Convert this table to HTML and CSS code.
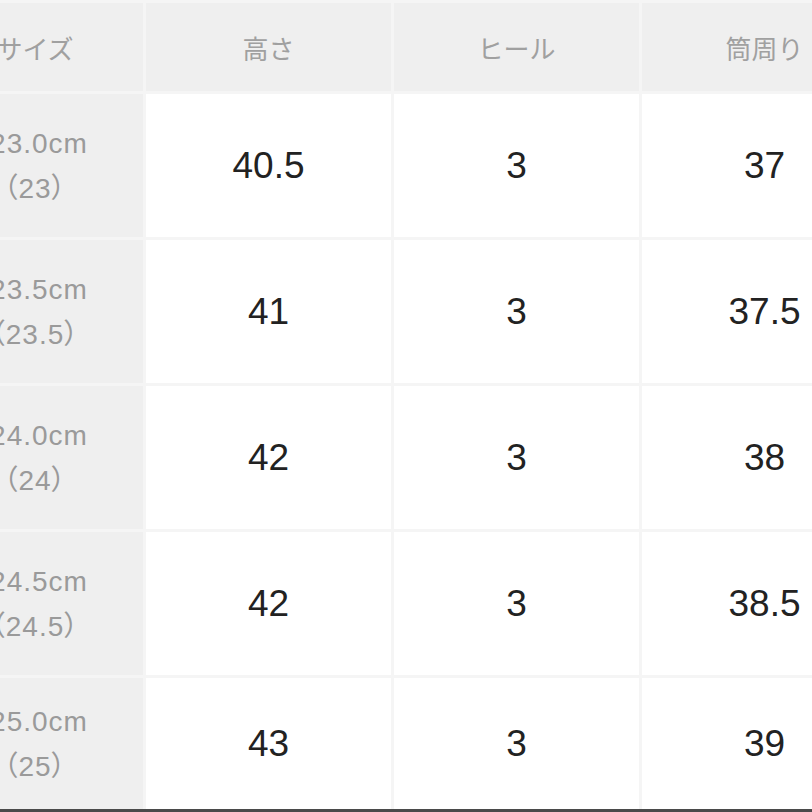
FILE: index.html
```html
<!DOCTYPE html>
<html lang="ja">
<head>
<meta charset="utf-8">
<title>サイズ表</title>
<link rel="stylesheet" href="styles.css">
</head>
<body>
<div class="frame">
  <table class="size-table">
    <colgroup>
      <col class="c-label">
      <col class="c-data">
      <col class="c-data">
      <col class="c-data">
    </colgroup>
    <thead>
      <tr>
        <th class="label">サイズ</th>
        <th>高さ</th>
        <th>ヒール</th>
        <th>筒周り</th>
      </tr>
    </thead>
    <tbody>
      <tr>
        <th class="label"><span class="cm">23.0cm</span><span class="jp">（23）</span></th>
        <td>40.5</td><td>3</td><td>37</td>
      </tr>
      <tr>
        <th class="label"><span class="cm">23.5cm</span><span class="jp">（23.5）</span></th>
        <td>41</td><td>3</td><td>37.5</td>
      </tr>
      <tr>
        <th class="label"><span class="cm">24.0cm</span><span class="jp">（24）</span></th>
        <td>42</td><td>3</td><td>38</td>
      </tr>
      <tr>
        <th class="label"><span class="cm">24.5cm</span><span class="jp">（24.5）</span></th>
        <td>42</td><td>3</td><td>38.5</td>
      </tr>
      <tr class="last">
        <th class="label"><span class="cm">25.0cm</span><span class="jp">（25）</span></th>
        <td>43</td><td>3</td><td>39</td>
      </tr>
    </tbody>
  </table>
</div>
</body>
</html>
```
FILE: styles.css
```css
html, body {
  margin: 0;
  padding: 0;
  background: #f5f5f5;
  overflow: hidden;
}

.frame {
  height: 809px;
  overflow: hidden;
  border-bottom: 3px solid #4a4a4a;
}

.size-table {
  margin-left: -60px;
  width: 950px;
  min-width: 950px;
  border-collapse: separate;
  border-spacing: 3px;
  background: #f5f5f5;
  table-layout: fixed;
  font-family: "Liberation Sans", "Noto Sans CJK JP", sans-serif;
}

.c-label { width: 200px; }
.c-data { width: 245px; }

.size-table th,
.size-table td {
  padding: 0;
  text-align: center;
  vertical-align: middle;
}

.size-table thead th {
  height: 88px;
  background: #efefef;
  color: #a0a0a0;
  font-family: "Noto Sans CJK JP", sans-serif;
  font-weight: 400;
  font-size: 26px;
}

.size-table thead th.label {
  padding-right: 16px;
}

.size-table tbody th.label {
  background: #efefef;
  color: #9a9a9a;
  font-weight: 400;
  font-size: 28px;
  line-height: 45px;
  letter-spacing: 1px;
  padding-right: 16px;
  height: 143px;
}

.size-table tbody tr.last th.label,
.size-table tbody tr.last td {
  height: 131px;
}

.cm {
  display: block;
  padding-left: 8px;
}

.jp {
  display: block;
  font-feature-settings: "palt";
}

.size-table td {
  background: #ffffff;
  color: #222222;
  font-size: 37px;
  height: 143px;
}
```
